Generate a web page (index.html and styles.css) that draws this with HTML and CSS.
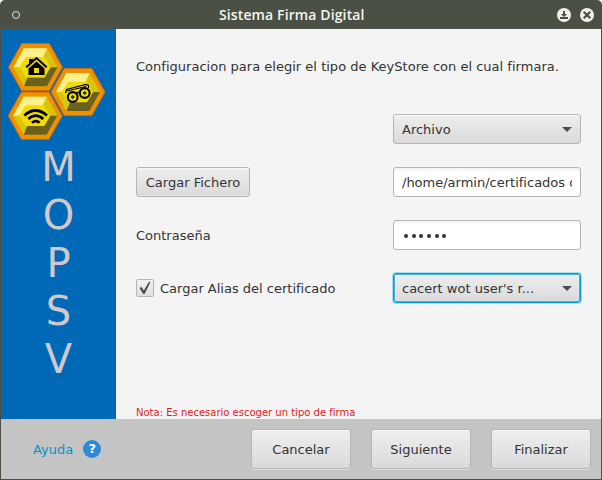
FILE: index.html
```html
<!DOCTYPE html>
<html lang="es">
<head>
<meta charset="utf-8">
<title>Sistema Firma Digital</title>
<link rel="stylesheet" href="styles.css">
</head>
<body>
<div class="window">
  <header class="titlebar">
    <span class="menu-dot"></span>
    <h1 class="title"><span>Sistema Firma Digital</span></h1>
    <div class="controls">
      <svg width="14" height="14" viewBox="0 0 14 14"><circle cx="7" cy="7" r="7" fill="#f2f1ef"/><path d="M6 3h2v3h2.200L7 9 3.800 6H6z" fill="#4b5045"/><path d="M3 10h8" stroke="#4b5045" stroke-width="2"/></svg>
      <svg width="14" height="14" viewBox="0 0 14 14"><circle cx="7" cy="7" r="7" fill="#f2f1ef"/><path d="M3.700 3.700l6.600 6.600M10.300 3.700l-6.600 6.600" stroke="#4b5045" stroke-width="2.200"/></svg>
    </div>
  </header>
  <div class="body">
    <aside class="sidebar">
      <svg class="logo" width="115" height="114" viewBox="1 29 115 114">
        <defs>
          <g id="cell">
            <path d="M-27 0L-13.800-23.600H13.800L27 0 13.800 23.600H-13.800Z" fill="#f29100" stroke="#c96d10" stroke-width="1"/>
            <path d="M-22 0L-11.500-19H11.500L22 0 11.500 19H-11.500Z" fill="#d9c60c"/>
            <path d="M-22 0L-11.500-19H11.500L7.500-10H-9L-15 0Z" fill="#fff08c"/>
            <path d="M22 0L11.500 19H-11.500L-8 10H9L15 0Z" fill="#6c611c"/>
            <path d="M-16.500 0L-9.500-10.300H8.500L15 0 9 10.300H-9.500Z" fill="#f0dc00"/>
          </g>
        </defs>
        <use href="#cell" x="35.500" y="67.200"/>
        <use href="#cell" x="78" y="92"/>
        <use href="#cell" x="35.200" y="115.700"/>
        <path d="M28.500 68.500L36.500 61.500 44.500 68.500V75H28.500Z" fill="#000"/>
        <path d="M26.300 67.300L36.500 58 46.700 67.300" fill="none" stroke="#000" stroke-width="2"/>
        <path d="M29 59H33V61L29 64.500Z" fill="#000"/>
        <path d="M34 68H39V73H34Z" fill="#f0dc00"/>
        <g fill="none" stroke="#000">
          <circle cx="72.700" cy="97" r="4.900" stroke-width="2.100"/>
          <circle cx="84.700" cy="93" r="4.900" stroke-width="2.100"/>
          <path d="M65.500 93L66.500 89.500 86 84.500 88.500 85.500V88M67 91L86 86.500" stroke-width="1.200"/>
          <path d="M76 93L80 92" stroke-width="1.500"/>
          <circle cx="72.700" cy="97" r="1.200" fill="#66645a"/>
          <circle cx="84.700" cy="93" r="1.200" fill="#66645a"/>
        </g>
        <g fill="none" stroke="#000" stroke-width="2.700">
          <path d="M24.300 115.500Q35.500 105.500 47 115.500"/>
          <path d="M28.300 119Q35.700 112.300 43.300 119"/>
          <path d="M32 122.800Q35.800 119.300 39.600 122.800"/>
        </g>
      </svg>
      <div class="brand"><span>M</span><span>O</span><span>P</span><span>S</span><span>V</span></div>
    </aside>
    <main class="content">
      <p class="intro">Configuracion para elegir el tipo de KeyStore con el cual firmara.</p>
      <div class="form">
        <span></span>
        <div class="field combo"><span>Archivo</span><i class="arrow"></i></div>
        <button class="button load">Cargar Fichero</button>
        <div class="field input"><span class="clip">/home/armin/certificados d</span></div>
        <span class="label">Contraseña</span>
        <div class="field input password"><b></b><b></b><b></b><b></b><b></b><b></b></div>
        <label class="check"><span class="box"><svg width="18" height="18" viewBox="0 0 18 18"><path d="M3.500 9L5.500 8 7.800 11.500 13 2.700 14.500 3 8.500 15H7.200Z" fill="#4d4d4d"/></svg></span><span class="label">Cargar Alias del certificado</span></label>
        <div class="field combo focused"><span>cacert wot user's r...</span><i class="arrow"></i></div>
      </div>
      <p class="note">Nota: Es necesario escoger un tipo de firma</p>
    </main>
  </div>
  <footer class="footer">
    <a class="help">Ayuda</a><span class="help-icon">?</span>
    <div class="actions">
      <button class="button">Cancelar</button>
      <button class="button">Siguiente</button>
      <button class="button">Finalizar</button>
    </div>
  </footer>
</div>
</body>
</html>
```
FILE: styles.css
```css
* { box-sizing: border-box; }
body { margin: 0; background: #fff; font: 13px/16px "DejaVu Sans", sans-serif; color: #333; }
h1, p { margin: 0; font-weight: normal; }
.window { width: 602px; height: 480px; display: flex; flex-direction: column; background: #4b5045; border-radius: 5px 5px 0 0; padding: 0 1px 1px; }
.titlebar { height: 29px; display: flex; align-items: center; padding: 0 7px 0 11px; }
.menu-dot { width: 8px; height: 8px; border: 1.500px solid #e4e3df; border-radius: 50%; }
.title { flex: 1; padding-left: 199px; font: 600 14px/18px "Open Sans", sans-serif; letter-spacing: .12px; color: #f5f5f2; white-space: nowrap; }
.controls { display: flex; gap: 9px; }
.body { height: 390px; display: flex; }
.sidebar { width: 115px; background: #0069b7; }
.logo { display: block; }
.brand { display: flex; flex-direction: column; align-items: center; font-size: 40px; line-height: 48px; color: #d0c8cb; }
.content { flex: 1; display: flex; flex-direction: column; background: #f4f4f4; padding: 30px 20px 0; }
.intro { height: 55px; white-space: nowrap; letter-spacing: .015px; }
.form { display: grid; grid-template-columns: 257px 188px; grid-auto-rows: 30px; row-gap: 23px; align-items: center; }
.field { height: 30px; display: flex; align-items: center; border: 1px solid #b5b5b5; border-radius: 3px; padding: 0 8px; white-space: nowrap; }
.field > span, .label { padding-top: 2px; }
.combo { justify-content: space-between; background: linear-gradient(#eee, #dadada); box-shadow: inset 0 1px #fafafa; }
.focused { border: 1px solid #039ed3; box-shadow: 0 0 0 1px #a9dcec, inset 0 0 0 1px #46b2d5; }
.input { background: linear-gradient(#f2f2f2, #fff 4px); }
.clip { overflow: hidden; width: 171px; }
.arrow { border: 5px solid transparent; border-top-color: #4d4d4d; border-bottom: 0; }
.password { gap: 3.700px; padding-left: 10px; }
.password b { width: 4px; height: 4px; margin-top: 1px; border-radius: 50%; background: #333; }
.button { font: inherit; color: #333; border: 1px solid #b5b5b5; border-radius: 3px; background: linear-gradient(#eee, #dadada); box-shadow: inset 0 1px #fafafa, inset 0 -1px #e4e4e4; padding: 2px 0 0; }
.load { width: 114px; height: 30px; }
.check { display: flex; align-items: center; gap: 6px; }
.box { width: 18px; height: 18px; border: 1px solid #b5b5b5; border-radius: 2px; background: linear-gradient(#f3f3f3, #dedede); }
.box svg { display: block; margin: -1px; }
.note { margin-top: auto; height: 13px; font-size: 10px; line-height: 13px; color: #e01b1b; }
.footer { flex: 1; display: flex; align-items: center; background: #c4c4c4; padding: 0 10px 0 32px; }
.help { color: #0096c9; padding-top: 2px; }
.help-icon { margin-left: 10px; width: 18px; height: 18px; border-radius: 50%; background: #2b8bd6; color: #fff; font-weight: bold; text-align: center; line-height: 18px; }
.actions { margin-left: auto; display: flex; gap: 20px; }
.actions .button { width: 100px; height: 40px; box-shadow: inset 0 1px #fafafa, 0 1px #dfdfdf; }
```
